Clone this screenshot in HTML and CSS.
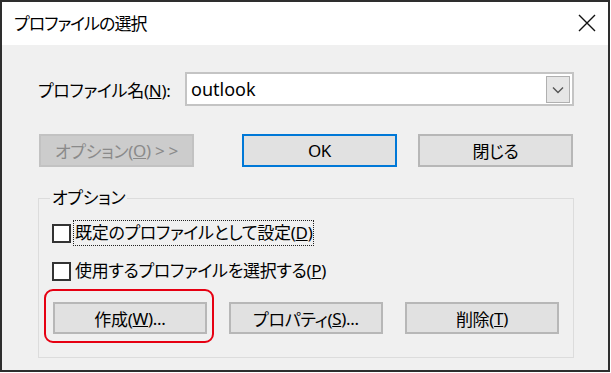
FILE: index.html
```html
<!DOCTYPE html>
<html lang="ja">
<head>
<meta charset="utf-8">
<title>プロファイルの選択</title>
<link rel="stylesheet" href="styles.css">
</head>
<body>
<div class="window">
  <div class="titlebar">
    <span class="title">プロファイルの選択</span>
    <svg class="close" width="18" height="18" viewBox="0 0 18 18"><path d="M1 1 L17 17 M17 1 L1 17" stroke="#111" stroke-width="1.4" fill="none"/></svg>
  </div>
  <div class="content">
    <div class="row-profile">
      <label class="profile-label">プロファイル名(<u>N</u>):</label>
      <div class="combo">
        <span class="combo-text">outlook</span>
        <span class="combo-btn"><svg width="12" height="8" viewBox="0 0 12 8"><path d="M1 1.5 L6 6.5 L11 1.5" stroke="#555" stroke-width="1.4" fill="none"/></svg></span>
      </div>
    </div>
    <div class="row-buttons">
      <button class="btn btn-disabled">オプション(<u>O</u>) &gt; &gt;</button>
      <button class="btn btn-default">OK</button>
      <button class="btn btn-close">閉じる</button>
    </div>
    <fieldset class="group">
      <legend>オプション</legend>
      <div class="check-row first">
        <span class="checkbox"></span>
        <span class="check-label focused">既定のプロファイルとして設定(<u>D</u>)</span>
      </div>
      <div class="check-row second">
        <span class="checkbox"></span>
        <span class="check-label">使用するプロファイルを選択する(<u>P</u>)</span>
      </div>
      <div class="row-actions">
        <div class="marked">
          <button class="btn btn-small">作成(<u>W</u>)...</button>
          <span class="highlight"></span>
        </div>
        <button class="btn btn-small">プロパティ(<u>S</u>)...</button>
        <button class="btn btn-small">削除(<u>T</u>)</button>
      </div>
    </fieldset>
  </div>
</div>
</body>
</html>
```
FILE: styles.css
```css
* { box-sizing: border-box; }
body {
  margin: 0;
  background: #ffffff;
  font-family: "Noto Sans", "Noto Sans CJK JP", sans-serif;
  font-feature-settings: "palt";
  font-size: 17px;
  letter-spacing: -0.3px;
  color: #000;
}
.window {
  width: 610px;
  height: 372px;
  border: 2px solid #2e2e2e;
  background: #f0f0f0;
  display: flex;
  flex-direction: column;
}
.titlebar {
  height: 43px;
  background: #ffffff;
  display: flex;
  align-items: center;
  justify-content: space-between;
  padding: 0 12px 2px 12px;
}
.title { font-size: 17px; letter-spacing: -1px; }
.close { display: block; }
.content {
  padding: 27px 34px 0 36px;
}
.row-profile {
  display: flex;
  align-items: center;
  height: 34px;
}
.profile-label {
  flex: 0 0 147px;
}
.combo {
  flex: 1;
  height: 34px;
  background: #fff;
  border: 2px solid #c4c4c4;
  display: flex;
  align-items: center;
  justify-content: space-between;
  padding: 0 2px 0 4px;
}
.combo-text { font-size: 18px; letter-spacing: 0; }
.combo-btn {
  width: 24px;
  height: 27px;
  background: #e6e6e6;
  border: 1px solid #b0b0b0;
  display: flex;
  align-items: center;
  justify-content: center;
  padding-top: 2px;
}
.row-buttons {
  display: flex;
  margin-top: 28px;
}
.btn {
  font: inherit;
  font-feature-settings: "palt";
  letter-spacing: -0.3px;
  color: #000;
  background: #e1e1e1;
  border: 2px solid #b7b7b7;
  height: 33px;
  width: 155px;
  padding: 0;
  display: flex;
  align-items: center;
  justify-content: center;
}
.btn-disabled {
  margin-left: 1px;
  background: #cccccc;
  border-color: #c2c2c2;
  color: #8a8a8a;
}
.btn-default {
  margin-left: 48px;
  border-color: #0078d7;
}
.btn-close {
  margin-left: 21px;
}
.group {
  margin: 20px 0 0 0;
  border: 1px solid #dcdcdc;
  padding: 0 14px 23px 13px;
  min-width: 0;
}
.group legend {
  padding: 0 2px;
  line-height: 22px;
  margin-left: -2px;
}
.check-row {
  display: flex;
  align-items: center;
  height: 26px;
}
.check-row.first { margin-top: 11px; }
.check-row.second { margin-top: 12px; }
.checkbox {
  width: 19px;
  height: 19px;
  border: 2px solid #333;
  background: #fff;
  flex: 0 0 auto;
}
.check-label {
  margin-left: 3px;
  padding: 0 1px;
  line-height: 24px;
}
.focused {
  outline: 1px dotted #222;
}
.row-actions {
  display: flex;
  gap: 22px;
  margin-top: 18px;
  margin-left: 1px;
}
.btn-small {
  width: 154px;
  height: 32px;
}
.marked {
  position: relative;
}
.highlight {
  position: absolute;
  left: -9px;
  top: -13px;
  width: 170px;
  height: 54px;
  border: 2.5px solid #e60012;
  border-radius: 9px;
}
```
